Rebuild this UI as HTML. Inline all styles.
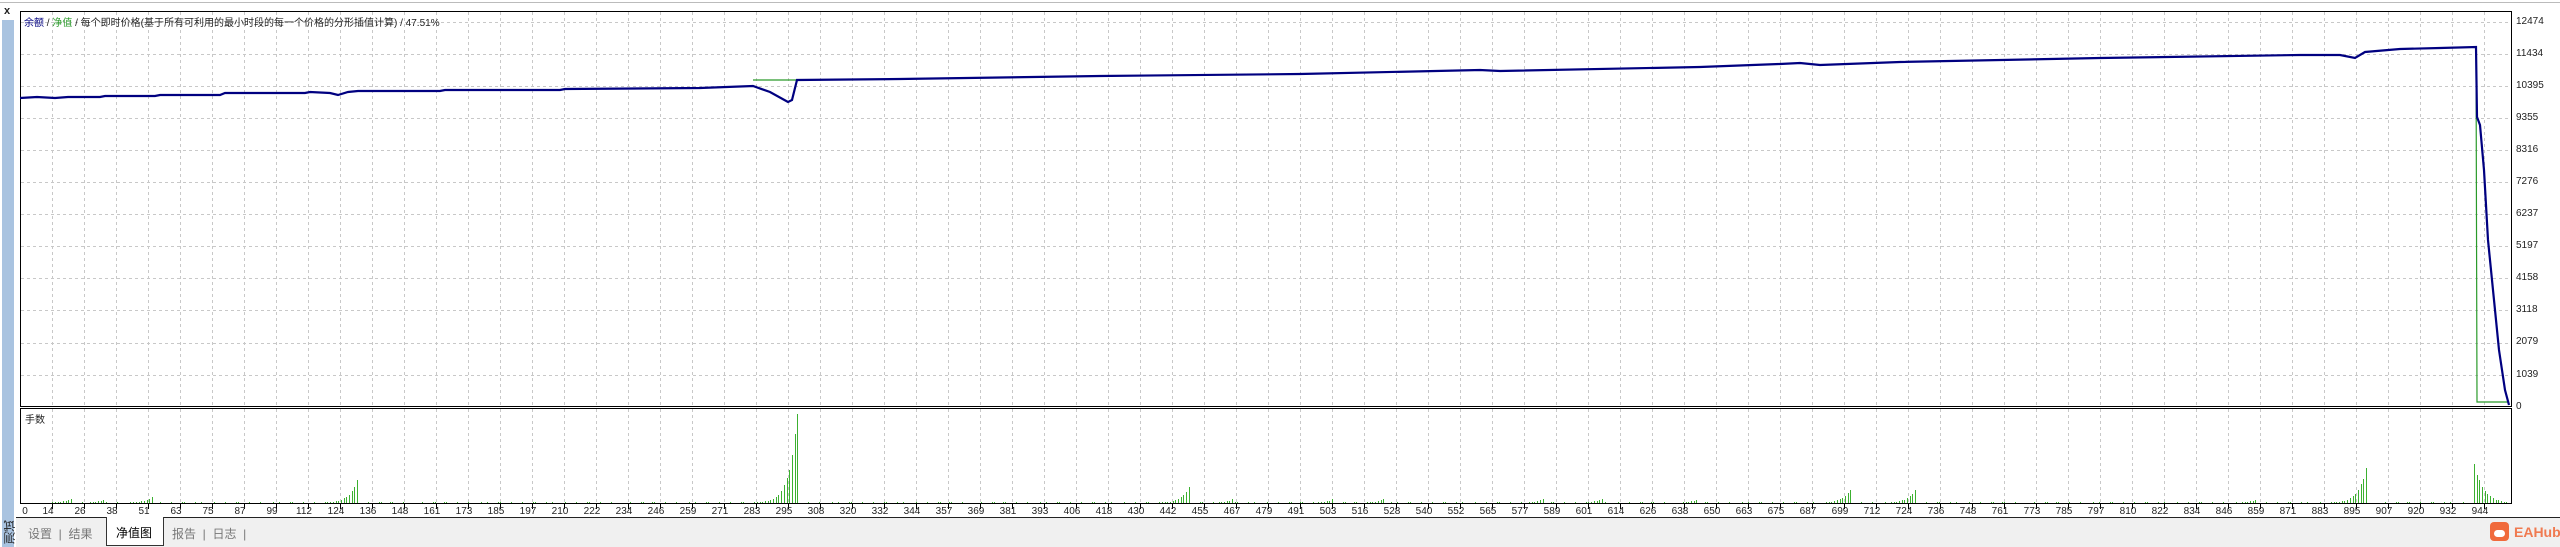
<!DOCTYPE html>
<html><head><meta charset="utf-8"><style>
body{margin:0;width:2560px;height:547px;background:#fff;overflow:hidden;position:relative;font-family:"Liberation Sans","Noto Sans CJK SC",sans-serif}
.t{position:absolute;font-size:11px;color:#222;white-space:nowrap}
</style></head><body>
<div style="position:absolute;left:0;top:2px;width:2560px;height:1px;background:#bbb"></div>
<div style="position:absolute;left:2px;top:20px;width:12px;height:527px;background:#a9c3e0"></div>
<div class="t" style="left:4px;top:5px;font-weight:bold;font-size:11px">x</div>
<div class="t" style="left:1px;top:520px;font-size:12px;writing-mode:vertical-rl;transform:rotate(180deg)">测试</div>
<div style="position:absolute;left:16px;top:517px;width:2544px;height:30px;background:#f0f0f0"></div>
<div style="position:absolute;left:16px;top:517px;width:2544px;height:1px;background:#222"></div>
<div style="position:absolute;left:106px;top:517px;width:56px;height:28px;background:#fff;border:1px solid #333;border-top:none"></div>
<div class="t" style="left:28px;top:525px;font-size:12px;color:#777">设置 &nbsp;| &nbsp;结果</div>
<div class="t" style="left:116px;top:524px;font-size:12px;color:#000">净值图</div>
<div class="t" style="left:172px;top:525px;font-size:12px;color:#777">报告 &nbsp;| &nbsp;日志 &nbsp;|</div>
<div style="position:absolute;left:2490px;top:522px;width:19px;height:19px;background:#f06a3c;border-radius:4px"></div>
<div style="position:absolute;left:2494px;top:530px;width:11px;height:7px;background:#fff;border-radius:5px"></div>
<div class="t" style="left:2514px;top:524px;font-size:14px;font-weight:bold;color:#f07a50">EAHub</div>
<svg id="s" width="2560" height="547" style="position:absolute;left:0;top:0" xmlns="http://www.w3.org/2000/svg">
<g id="grid" stroke="#c8c8c8" stroke-dasharray="3,3" stroke-width="1"></g>
<rect x="20.5" y="11.5" width="2491" height="395" fill="none" stroke="#000"/>
<rect x="20.5" y="408.5" width="2491" height="95" fill="none" stroke="#000"/>
<g id="bars" fill="#3cb030"></g>
<polyline fill="none" stroke="#2a9a2a" stroke-width="1.2" points="753,80 797,80"/>
<polyline fill="none" stroke="#2a9a2a" stroke-width="1.2" points="2476,47 2477,402 2509,402"/>
<polyline fill="none" stroke="#000080" stroke-width="2.2" points="20,98 37,97 55,98 68,97 100,97 105,96 155,96 160,95 220,95 225,93 305,93 310,92 330,93 338,95 348,92 358,91 440,91 445,90 560,90 565,89 700,88 753,86 770,92 788,102 792,100 797,80 900,79 1100,76 1300,74 1480,70 1500,71 1700,67 1780,64 1800,63 1820,65 1900,62 2100,58 2300,55 2340,55 2355,58 2365,52 2400,49 2440,48 2476,47 2477,117 2480,125 2484,170 2488,240 2494,300 2499,350 2505,390 2509,405"/>
</svg>
<div class="t" style="left:24px;top:14px;font-size:10px"><span style="color:#000080">余额</span> / <span style="color:#2a9a2a">净值</span> / 每个即时价格(基于所有可利用的最小时段的每一个价格的分形插值计算) / 47.51%</div>
<div class="t" style="left:25px;top:411px;font-size:10px">手数</div>
<div class="t" style="left:2516px;top:6px;font-size:10px;line-height:32.05px">12474<br>11434<br>10395<br>9355<br>8316<br>7276<br>6237<br>5197<br>4158<br>3118<br>2079<br>1039<br>0</div>
<div id="xl"></div>
<script>
var g=document.getElementById('grid'),h='';
for(var x=52;x<2510;x+=32){h+='<line x1="'+(x+.5)+'" y1="12" x2="'+(x+.5)+'" y2="406"/><line x1="'+(x+.5)+'" y1="409" x2="'+(x+.5)+'" y2="503"/><line x1="'+(x+.5)+'" y1="504" x2="'+(x+.5)+'" y2="509" stroke-dasharray="none" stroke="#000"/>';}
for(var y=22;y<406;y+=32.05){h+='<line x1="21" y1="'+(Math.round(y)+.5)+'" x2="2511" y2="'+(Math.round(y)+.5)+'"/>';}
g.innerHTML=h;
var labs="0 14 26 38 51 63 75 87 99 112 124 136 148 161 173 185 197 210 222 234 246 259 271 283 295 308 320 332 344 357 369 381 393 406 418 430 442 455 467 479 491 503 516 528 540 552 565 577 589 601 614 626 638 650 663 675 687 699 712 724 736 748 761 773 785 797 810 822 834 846 859 871 883 895 907 920 932 944".split(' ');
var xh='';for(var i=0;i<labs.length;i++){var cx=i==0?25:48+32*(i-1);xh+='<div class="t" style="left:'+(cx-12)+'px;width:24px;text-align:center;top:506px;font-size:10px">'+labs[i]+'</div>';}
document.getElementById('xl').innerHTML=xh;
var b='';function bar(x,hh){b+='<rect x="'+x+'" y="'+(503-hh)+'" width="1" height="'+hh+'"/>';}
for(var x=44;x<2508;x+=2.7){var xx=Math.round(x);var hh=0;
 if(((xx*7)%13)<4)hh=1;
 [[338,357,23],[770,797,89],[1172,1190,18],[1832,1850,13],[1898,1915,13],[2350,2367,40],[2473,2506,44],[65,72,5],[95,105,4],[140,152,6],[1230,1233,4],[1330,1333,4],[1380,1383,4],[1540,1543,4],[1600,1603,5],[1695,1698,4],[2250,2255,3]].forEach(function(p){
  if(p[1]==2506){if(xx>=p[0]&&xx<=p[1]){hh=Math.max(hh,Math.round(p[2]*Math.exp(-(xx-p[0])/9)));}}
  else if(xx>=p[0]-20&&xx<=p[1]){hh=Math.max(hh,Math.round(p[2]*Math.exp(-(p[1]-xx)/8)));}
 });
 if(hh>0)bar(xx,hh);}
document.getElementById('bars').innerHTML=b;
</script>
</body></html>
